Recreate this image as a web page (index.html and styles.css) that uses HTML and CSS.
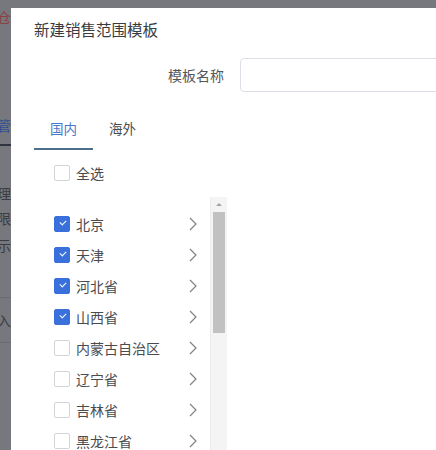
FILE: index.html
```html
<!DOCTYPE html>
<html lang="zh-CN">
<head>
    <meta charset="UTF-8">
    <meta name="viewport" content="width=device-width, initial-scale=1.0">
    <title>新建销售范围模板</title>
    <link rel="stylesheet" href="styles.css">
</head>
<body>
    <!-- page behind the dialog, only a sliver shows -->
    <div class="page-side">
        <div class="side-row red" style="height: 27px">全仓</div>
        <div class="side-row blue" style="height: 108px; align-items: flex-end">主管</div>
        <div class="side-line dark"></div>
        <div class="side-row" style="height: 57px; align-items: flex-end">处理</div>
        <div class="side-row" style="height: 30px">权限</div>
        <div class="side-row" style="height: 24px">展示</div>
        <div class="side-line" style="margin-top: 40px"></div>
        <div class="side-row" style="height: 44px">输入</div>
        <div class="side-line"></div>
    </div>

    <div class="dialog">
        <div class="dialog-title">新建销售范围模板</div>

        <div class="form-row">
            <label class="form-label">模板名称</label>
            <input class="form-input" type="text">
        </div>

        <div class="tabs">
            <div class="tab active">国内</div>
            <div class="tab">海外</div>
        </div>

        <label class="check-all">
            <span class="checkbox"></span>
            <span>全选</span>
        </label>

        <div class="region">
            <div class="region-list">
                <div class="region-item"><span class="checkbox checked"></span><span class="name">北京</span><svg class="arrow" viewBox="0 0 8 14"><path d="M1 1L7 7L1 13"/></svg></div>
                <div class="region-item"><span class="checkbox checked"></span><span class="name">天津</span><svg class="arrow" viewBox="0 0 8 14"><path d="M1 1L7 7L1 13"/></svg></div>
                <div class="region-item"><span class="checkbox checked"></span><span class="name">河北省</span><svg class="arrow" viewBox="0 0 8 14"><path d="M1 1L7 7L1 13"/></svg></div>
                <div class="region-item"><span class="checkbox checked"></span><span class="name">山西省</span><svg class="arrow" viewBox="0 0 8 14"><path d="M1 1L7 7L1 13"/></svg></div>
                <div class="region-item"><span class="checkbox"></span><span class="name">内蒙古自治区</span><svg class="arrow" viewBox="0 0 8 14"><path d="M1 1L7 7L1 13"/></svg></div>
                <div class="region-item"><span class="checkbox"></span><span class="name">辽宁省</span><svg class="arrow" viewBox="0 0 8 14"><path d="M1 1L7 7L1 13"/></svg></div>
                <div class="region-item"><span class="checkbox"></span><span class="name">吉林省</span><svg class="arrow" viewBox="0 0 8 14"><path d="M1 1L7 7L1 13"/></svg></div>
                <div class="region-item"><span class="checkbox"></span><span class="name">黑龙江省</span><svg class="arrow" viewBox="0 0 8 14"><path d="M1 1L7 7L1 13"/></svg></div>
                <div class="region-item"><span class="checkbox"></span><span class="name">上海</span><svg class="arrow" viewBox="0 0 8 14"><path d="M1 1L7 7L1 13"/></svg></div>
            </div>
            <div class="scrollbar">
                <div class="scroll-up"></div>
                <div class="scroll-thumb"></div>
            </div>
        </div>
    </div>
</body>
</html>
```

FILE: styles.css
```css
body {
    margin: 0;
    width: 436px;
    height: 450px;
    overflow: hidden;
    position: relative;
    background-color: #77787d;
    font-family: "Noto Sans CJK SC", "Noto Sans", sans-serif;
}

/* page behind the mask */
.page-side {
    width: 11px;
    height: 450px;
    overflow: hidden;
    color: #3b3c41;
    font-size: 14px;
}

.side-row {
    display: flex;
    justify-content: flex-end;
    align-items: center;
    white-space: nowrap;
}

.side-row.red {
    color: #8d3f45;
    align-items: flex-end;
}

.side-row.blue {
    color: #2e4d95;
}

.side-line {
    height: 1px;
    background-color: #6c6d72;
}

.side-line.dark {
    height: 2px;
    margin-top: 9px;
    background-color: #2f3440;
}

/* dialog */
.dialog {
    position: absolute;
    left: 11px;
    top: 8px;
    right: -40px;
    bottom: -40px;
    background-color: #fff;
    color: #606266;
}

.dialog-title {
    padding: 9px 23px 0;
    font-size: 15.5px;
    line-height: 24px;
    color: #3a3b3e;
}

.form-row {
    display: flex;
    align-items: center;
    margin-top: 17px;
}

.form-label {
    width: 229px;
    box-sizing: border-box;
    padding-right: 16px;
    text-align: right;
    font-size: 14px;
    color: #555659;
}

.form-input {
    flex: 1;
    height: 34px;
    box-sizing: border-box;
    border: 1px solid #dcdfe6;
    border-radius: 4px;
    margin: 0;
    outline: none;
}

.tabs {
    display: flex;
    margin-top: 18px;
    padding-left: 23px;
}

.tab {
    height: 40px;
    box-sizing: border-box;
    padding: 0 16px 2px;
    display: flex;
    align-items: center;
    font-size: 13.5px;
    color: #4a4b4f;
    border-bottom: 2px solid transparent;
}

.tab.active {
    color: #4a78c9;
    border-bottom-color: #4c6f8c;
}

.check-all {
    display: flex;
    align-items: center;
    gap: 6px;
    margin-top: 15px;
    padding-left: 43px;
    height: 16px;
    font-size: 14px;
    color: #4a4b4f;
}

.checkbox {
    width: 16px;
    height: 16px;
    box-sizing: border-box;
    border: 1px solid #d3d4d8;
    border-radius: 2px;
    background-color: #fff;
    position: relative;
    flex-shrink: 0;
}

.checkbox.checked {
    background-color: #3a70dc;
    border-color: #3a70dc;
}

.checkbox.checked::after {
    content: "";
    position: absolute;
    left: 4.5px;
    top: 3.5px;
    width: 5px;
    height: 3px;
    border-left: 1.5px solid #fff;
    border-bottom: 1.5px solid #fff;
    transform: rotate(-45deg);
}

.region {
    display: flex;
    margin-top: 16px;
    padding-left: 43px;
}

.region-list {
    width: 156px;
    padding-top: 11px;
}

.region-item {
    display: flex;
    align-items: center;
    height: 31px;
    padding-right: 13px;
    font-size: 14px;
    color: #4a4b4f;
}

.region-item .name {
    flex: 1;
    margin-left: 6px;
}

.arrow {
    width: 8px;
    height: 14px;
    fill: none;
    stroke: #808185;
    stroke-width: 1.2;
}

.scrollbar {
    width: 17px;
    height: 260px;
    box-sizing: border-box;
    background-color: #f4f4f4;
    border-left: 1px solid #ececec;
    padding: 0 2px;
}

.scroll-up {
    height: 15px;
    display: flex;
    justify-content: center;
    align-items: center;
}

.scroll-up::before {
    content: "";
    border-left: 3px solid transparent;
    border-right: 3px solid transparent;
    border-bottom: 3px solid #a3a3a3;
}

.scroll-thumb {
    height: 121px;
    background-color: #c1c1c1;
}
```
